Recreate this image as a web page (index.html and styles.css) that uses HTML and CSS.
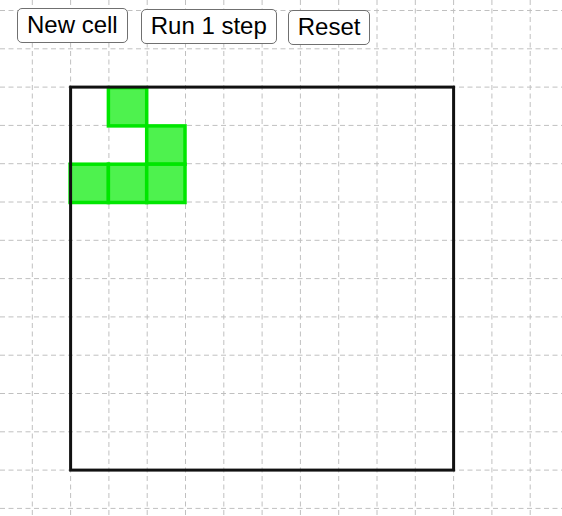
FILE: index.html
```html
<!DOCTYPE html>
<html>
<head>
<meta charset="utf-8">
<link rel="stylesheet" href="styles.css">
</head>
<body>
<div class="app">
  <svg class="board" width="562" height="516" viewBox="0 0 562 516" xmlns="http://www.w3.org/2000/svg">
    <g class="grid" id="grid"></g>
    <g class="cells">
      <rect x="108.4" y="87.6" width="38.3" height="38.3"/>
      <rect x="146.7" y="125.9" width="38.3" height="38.3"/>
      <rect x="70.1" y="164.2" width="38.3" height="38.3"/>
      <rect x="108.4" y="164.2" width="38.3" height="38.3"/>
      <rect x="146.7" y="164.2" width="38.3" height="38.3"/>
    </g>
    <rect class="frame" x="70.6" y="87.1" width="383" height="383"/>
  </svg>
  <div class="toolbar">
    <button class="btn btn-new">New cell</button>
    <button class="btn btn-run">Run 1 step</button>
    <button class="btn btn-reset">Reset</button>
  </div>
</div>
<script>
  (function () {
    var g = document.getElementById('grid');
    var ns = 'http://www.w3.org/2000/svg';
    var s = 38.3;
    for (var i = 0; i < 15; i++) {
      var x = 32.3 + i * s;
      var l = document.createElementNS(ns, 'line');
      l.setAttribute('x1', x); l.setAttribute('x2', x);
      l.setAttribute('y1', 0); l.setAttribute('y2', 516);
      g.appendChild(l);
      var y = 10.5 + i * s;
      var h = document.createElementNS(ns, 'line');
      h.setAttribute('y1', y); h.setAttribute('y2', y);
      h.setAttribute('x1', 0); h.setAttribute('x2', 562);
      g.appendChild(h);
    }
  })();
</script>
</body>
</html>
```
FILE: styles.css
```css
html, body {
  margin: 0;
  padding: 0;
  background: #ffffff;
}
body {
  width: 562px;
  height: 516px;
  overflow: hidden;
  font-family: "Liberation Sans", Arial, sans-serif;
}
.app {
  position: relative;
  width: 562px;
  height: 516px;
}
.board {
  display: block;
}
.grid line {
  stroke: #c0c0c0;
  stroke-width: 1;
  stroke-dasharray: 5 3.5;
}
.cells rect {
  fill: #4ef24e;
  stroke: #00e600;
  stroke-width: 3.5;
}
.frame {
  fill: none;
  stroke: #111111;
  stroke-width: 3;
}
.toolbar {
  position: absolute;
  top: 0;
  left: 0;
  display: flex;
  align-items: flex-start;
  padding-left: 17px;
}
.btn {
  font-family: "Liberation Sans", Arial, sans-serif;
  font-size: 24px;
  line-height: 29px;
  color: #000;
  background: #fff;
  border: 1.5px solid #707070;
  border-radius: 5px;
  padding: 1px 9px 3px;
  margin: 0;
}
.btn-new {
  margin-top: 8px;
}
.btn-run {
  margin-top: 9px;
  margin-left: 13px;
}
.btn-reset {
  margin-top: 10px;
  margin-left: 11px;
}
```
